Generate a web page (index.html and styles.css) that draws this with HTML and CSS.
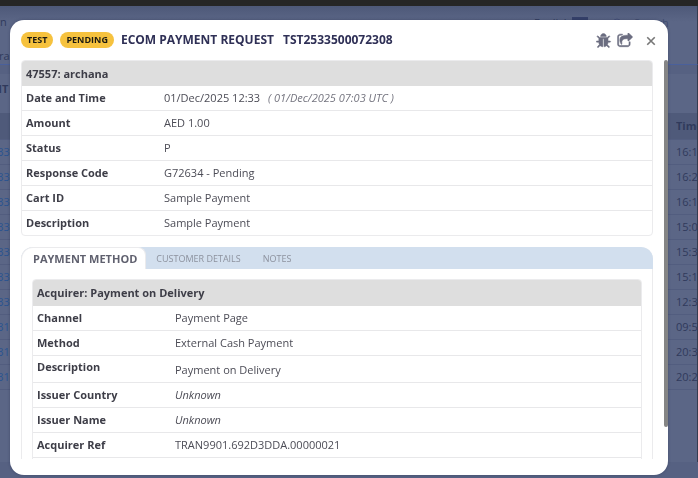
FILE: index.html
```html
<!DOCTYPE html>
<html lang="en">
<head>
<meta charset="utf-8">
<title>Payment request</title>
<link rel="stylesheet" href="styles.css">
</head>
<body>
<div class="page" aria-hidden="true">
  <div class="chrome"></div>
  <div class="topbar"><span class="crumb">n</span><span class="lang">English</span><span class="flag"></span><svg class="lens" viewBox="0 0 10 10"><circle cx="5" cy="5" r="4"/></svg><span class="find">Search</span></div>
  <div class="subbar"><span>rar</span></div>
  <div class="gap"></div>
  <div class="panel">
    <div class="caption">NT</div>
    <div class="line head"><span></span><span class="time">Time</span></div>
    <div class="line"><span class="ref">533</span><span class="time">16:19</span></div>
    <div class="line"><span class="ref">533</span><span class="time">16:20</span></div>
    <div class="line"><span class="ref">533</span><span class="time">16:15</span></div>
    <div class="line"><span class="ref">533</span><span class="time">15:04</span></div>
    <div class="line"><span class="ref">533</span><span class="time">15:32</span></div>
    <div class="line"><span class="ref">533</span><span class="time">15:11</span></div>
    <div class="line"><span class="ref">533</span><span class="time">12:35</span></div>
    <div class="line"><span class="ref">531</span><span class="time">09:52</span></div>
    <div class="line"><span class="ref">531</span><span class="time">20:33</span></div>
    <div class="line"><span class="ref">531</span><span class="time">20:24</span></div>
  </div>
</div>

<div class="overlay">
  <section class="modal" role="dialog" aria-labelledby="title">
    <header class="modal-head">
      <span class="badge">TEST</span>
      <span class="badge">PENDING</span>
      <h1 id="title"><span>ECOM PAYMENT REQUEST</span><span>TST2533500072308</span></h1>
      <div class="tools">
        <button type="button" aria-label="Debug"><svg class="icon" viewBox="0 0 1792 1792"><path d="M1632 960q0 26-19 45t-45 19h-224q0 171-67 290l208 209q19 19 19 45t-19 45q-18 19-45 19t-45-19l-198-197q-5 5-15 13t-42 28.5-65 36.5-82 29-97 13v-896h-128v896q-51 0-101.5-13.5t-87-33-66-39-43.5-32.5l-15-14-183 207q-20 21-48 21-24 0-43-16-19-18-20.500-44.500t15.500-46.500l202-227q-58-114-58-274h-224q-26 0-45-19t-19-45 19-45 45-19h224v-294l-173-173q-19-19-19-45t19-45 45-19 45 19l173 173h844l173-173q19-19 45-19t45 19 19 45-19 45l-173 173v294h224q26 0 45 19t19 45zm-480-576h-640q0-133 93.500-226.500t226.500-93.500 226.500 93.500 93.500 226.500z"/></svg></button>
        <button type="button" aria-label="Share"><svg class="icon" viewBox="0 0 1792 1792"><path d="M1472 989v259q0 119-84.500 203.500t-203.500 84.500h-832q-119 0-203.500-84.500t-84.500-203.500v-832q0-119 84.500-203.500t203.500-84.500h255q13 0 22.500 9.500t9.500 22.500q0 27-26 32-77 26-133 60-10 4-16 4h-112q-66 0-113 47t-47 113v832q0 66 47 113t113 47h832q66 0 113-47t47-113v-214q0-19 18-29 28-13 54-37 16-16 35-8 21 9 21 29zm237-496l-384 384q-18 19-45 19-12 0-25-5-39-17-39-59v-192h-160q-323 0-438 131-119 137-74 473 3 23-20 34-8 2-12 2-16 0-26-13-10-14-21-31t-39.500-68.500-49.500-99.500-38.500-114-17.500-122q0-49 3.500-91t14-90 28-88 47-81.500 68.500-74 94.500-61.500 124.500-48.500 159.500-30.500 196.500-11h160v-192q0-42 39-59 13-5 25-5 26 0 45 19l384 384q19 19 19 45t-19 45z"/></svg></button>
        <button type="button" class="close" aria-label="Close"><svg viewBox="0 0 8 8"><path d="M1 1l6 6M7 1l-6 6"/></svg></button>
      </div>
    </header>
    <div class="scroll">
      <div class="content">
        <table class="details">
          <colgroup><col class="label"><col></colgroup>
          <thead><tr><th colspan="2">47557: archana</th></tr></thead>
          <tbody>
            <tr><th>Date and Time</th><td>01/Dec/2025 12:33 <em>( 01/Dec/2025 07:03 UTC )</em></td></tr>
            <tr><th>Amount</th><td>AED 1.00</td></tr>
            <tr><th>Status</th><td>P</td></tr>
            <tr><th>Response Code</th><td>G72634 - Pending</td></tr>
            <tr><th>Cart ID</th><td>Sample Payment</td></tr>
            <tr><th>Description</th><td>Sample Payment</td></tr>
          </tbody>
        </table>
        <div class="tabbox">
          <div class="tabs" role="tablist">
            <button type="button" class="tab active" role="tab" aria-selected="true">PAYMENT METHOD</button>
            <button type="button" class="tab" role="tab">CUSTOMER DETAILS</button>
            <button type="button" class="tab" role="tab">NOTES</button>
          </div>
          <div class="tabpanel" role="tabpanel">
            <table class="details">
              <colgroup><col class="label"><col></colgroup>
              <thead><tr><th colspan="2">Acquirer: Payment on Delivery</th></tr></thead>
              <tbody>
                <tr><th>Channel</th><td>Payment Page</td></tr>
                <tr><th>Method</th><td>External Cash Payment</td></tr>
                <tr class="tall"><th>Description</th><td>Payment on Delivery</td></tr>
                <tr><th>Issuer Country</th><td><i>Unknown</i></td></tr>
                <tr><th>Issuer Name</th><td><i>Unknown</i></td></tr>
                <tr><th>Acquirer Ref</th><td>TRAN9901.692D3DDA.00000021</td></tr>
                <tr><th></th><td></td></tr>
              </tbody>
            </table>
          </div>
        </div>
      </div>
      <div class="rail"><div class="thumb"></div></div>
    </div>
  </section>
</div>
</body>
</html>
```
FILE: styles.css
```css
* { box-sizing: border-box; }

html, body { height: 100%; }

body {
  margin: 0;
  overflow: hidden;
  font-family: "Open Sans", "Noto Sans", sans-serif;
  font-size: 11px;
  line-height: 16px;
  color: #4c4c56;
}

button {
  padding: 0;
  border: 0;
  background: none;
  font: inherit;
  color: inherit;
}

.page {
  display: flex;
  flex-direction: column;
  height: 100vh;
  background: #566182;
  color: #303a5c;
}

.chrome { height: 6px; flex: none; background: #262626; }

.topbar {
  display: flex;
  align-items: center;
  height: 34px;
  flex: none;
  background: linear-gradient(#4e5979, #5b6686 16px);
  border-right: 1px solid #343c50;
}

.crumb { width: 534px; padding-bottom: 2px; }
.lang { width: 38px; }
.flag { width: 16px; height: 12px; background: #35406a; }
.lens { width: 10px; height: 10px; margin: 0 12px 0 24px; fill: none; stroke: #46517a; }
.find { color: #414c70; }

.subbar {
  height: 25px;
  flex: none;
  padding: 8px 0 0;
  background: #5b6686;
  border-bottom: 1px solid #4a609b;
  border-right: 1px solid #343c50;
}
.subbar span { margin-left: -1px; }

.gap { height: 9px; flex: none; background: #566182; border-right: 1px solid #343c50; }

.panel {
  flex: 1;
  margin-bottom: 16px;
  background: #5b6686;
  border-right: 1px solid #343c50;
}

.caption { height: 39px; padding-top: 7px; margin-left: -7px; font-weight: 700; }

.line {
  display: flex;
  justify-content: space-between;
  align-items: center;
  height: 25px;
  overflow: hidden;
  border-bottom: 1px solid #525d7f;
}
.line.head { height: 27px; background: #4f5a7a; font-weight: 700; }
.ref { margin-left: -9px; color: #2b5490; }
.time { width: 21px; overflow: hidden; white-space: nowrap; }

.overlay {
  position: fixed;
  inset: 0;
  display: flex;
  padding: 20px 30px 3px 10px;
}

.modal {
  flex: 1;
  display: flex;
  flex-direction: column;
  padding-bottom: 16px;
  background: #fff;
  border-radius: 14px;
  box-shadow: 0 0 3px rgba(30, 38, 70, .4);
}

.modal-head {
  display: flex;
  align-items: center;
  flex: none;
  gap: 7px;
  height: 40px;
  padding: 0 12px 0 11px;
}

.badge {
  padding: 0 6px;
  border-radius: 8px;
  background: #f6c23e;
  color: #1c1a12;
  font-size: 9px;
  font-weight: 700;
}

h1 {
  display: flex;
  gap: 9px;
  margin: 0;
  font-size: 12px;
  font-weight: 700;
  white-space: nowrap;
  color: #2f3056;
}

.tools { display: flex; align-items: center; gap: 5px; margin-left: auto; padding-top: 2px; color: #6b6d80; }
.tools button { display: flex; }
.icon { width: 16px; height: 16px; fill: currentColor; stroke: currentColor; stroke-width: 60; }
.close { margin-left: 8px; }
.close svg { width: 10px; height: 10px; fill: none; stroke: #777; stroke-width: 1.3; }

.scroll { display: flex; flex: 1; min-height: 0; }
.content { flex: 1; padding: 0 11px; overflow: hidden; }
.rail { width: 4px; }
.thumb { height: 92%; border-radius: 2px; background: #858585; }

.details {
  width: 100%;
  table-layout: fixed;
  border: 1px solid #ebebed;
  border-radius: 4px;
  border-collapse: separate;
  border-spacing: 0;
  overflow: hidden;
}
.details .label { width: 138px; }
.details th, .details td {
  height: 25px;
  padding: 0 4px;
  border-bottom: 1px solid #e8e8ea;
  text-align: left;
  white-space: nowrap;
}
.details tr:last-child > * { border-bottom: 0; }
.details tbody tr:last-child > * { height: 24px; }
.details th { color: #3d3d47; font-weight: 700; }
.details thead th { background: #dedede; }
.details .tall > * { height: 27px; }
.details .tall th { padding-bottom: 4px; }
.details .tall td { padding-top: 2px; }
.details em { margin-left: 5px; color: #74747f; }

.tabbox {
  margin-top: 11px;
  border: 1px solid #ebebed;
  border-top: 0;
  border-radius: 12px 12px 0 0;
}
.tabs {
  display: flex;
  height: 22px;
  margin: 0 -1px;
  border-radius: 12px 12px 0 0;
  background: #d2dfee;
}
.tab { padding: 1px 12px 0 10px; font-size: 9px; color: #8d929e; }
.tab.active {
  border: 1px solid #ebebed;
  border-bottom: 0;
  border-radius: 12px 8px 0 0;
  background: #fff;
  padding: 0 8px 0 11px;
  font-size: 11px;
  font-weight: 700;
  color: #60616f;
}
.tabpanel { padding: 10px; }
.tabpanel thead th { height: 26px; }
```
